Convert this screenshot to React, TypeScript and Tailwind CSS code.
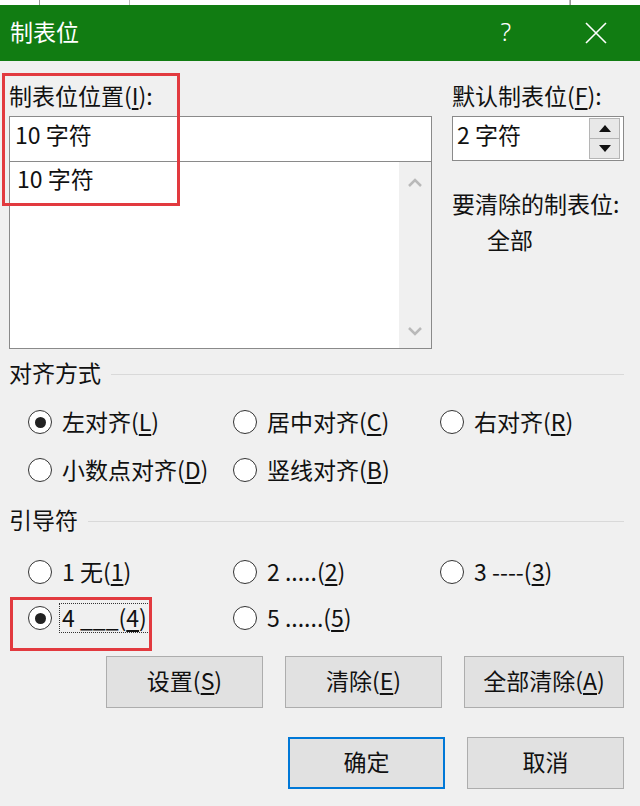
import React from "react";

function Radio({ checked = false }: { checked?: boolean }) {
  return (
    <span className="flex h-[24px] w-[24px] shrink-0 items-center justify-center rounded-full border border-[#333] bg-white">
      {checked && <span className="h-[11px] w-[11px] rounded-full bg-[#222]" />}
    </span>
  );
}

function Option({
  checked,
  focus,
  children,
}: {
  checked?: boolean;
  focus?: boolean;
  children: React.ReactNode;
}) {
  return (
    <label className="flex items-center gap-[10px]">
      <Radio checked={checked} />
      <span
        className={
          focus
            ? "-ml-[3px] border border-dotted border-[#333] px-[2px] pb-[2px] leading-[26px]"
            : "pb-[3px] leading-[28px]"
        }
      >
        {children}
      </span>
    </label>
  );
}

function Key({ children }: { children: React.ReactNode }) {
  return <u className="underline-offset-[3px]">{children}</u>;
}

function GroupTitle({ children }: { children: React.ReactNode }) {
  return (
    <div className="flex h-[36px] items-center gap-[10px]">
      <span className="pb-[4px] leading-[32px]">{children}</span>
      <span className="h-px flex-1 bg-[#d9d9d9]" />
    </div>
  );
}

function Btn({
  children,
  primary = false,
  w = "w-[157px]",
}: {
  children: React.ReactNode;
  primary?: boolean;
  w?: string;
}) {
  return (
    <button
      className={`${w} h-[52px] bg-[#e1e1e1] pb-[4px] text-[23px] text-[#111] ${
        primary ? "border-2 border-[#0078d7]" : "border border-[#adadad]"
      }`}
    >
      {children}
    </button>
  );
}

function Chevron({ up }: { up?: boolean }) {
  return (
    <svg width="16" height="10" viewBox="0 0 16 10" fill="none">
      <path
        d={up ? "M2 8 L8 2 L14 8" : "M2 2 L8 8 L14 2"}
        stroke="#b9b9b9"
        strokeWidth="2.5"
      />
    </svg>
  );
}

export default function App() {
  return (
    <div className="h-[806px] w-[640px] overflow-hidden bg-[#f0f0f0] font-['Noto_Sans_CJK_SC','Noto_Sans',sans-serif] text-[23px] text-[#111]">
      {/* strip of the sheet behind the dialog */}
      <div className="flex h-[5px] bg-white">
        <span className="w-[40px] border-r border-[#999]" />
        <span className="w-[90px] border-r border-[#bbb]" />
        <span className="w-[440px] border-r border-[#bbb]" />
        <span className="flex-1 border-l border-[#999]" />
      </div>

      {/* title bar */}
      <div className="flex h-[56px] items-center bg-[#117c12] pl-[10px] text-white">
        <span className="pb-[4px] leading-[52px]">制表位</span>
        <span className="ml-auto pb-[4px] font-['Noto_Sans',sans-serif] text-[25px] font-light leading-[52px]">
          ?
        </span>
        <span className="ml-[74px] mr-[33px] flex items-center">
          <svg width="22" height="22" viewBox="0 0 22 22">
            <path d="M1 1 L21 21 M21 1 L1 21" stroke="white" strokeWidth="1.6" />
          </svg>
        </span>
      </div>

      {/* body */}
      <div className="relative pl-[9px] pr-[16px] pt-[16px]">
        <div className="flex gap-[20px]">
          <div className="w-[423px]">
            <div className="h-[36px] leading-[36px]">
              制表位位置(<Key>I</Key>):
            </div>
            <div className="mt-[3px] h-[46px] border border-[#8a8a8a] bg-white pl-[5px] leading-[34px]">
              10 字符
            </div>
            <div className="flex h-[187px] border-x border-b border-[#8a8a8a] bg-white">
              <div className="flex-1 pl-[7px] leading-[32px]">10 字符</div>
              <div className="flex w-[32px] flex-col items-center justify-between bg-[#f0f0f0] pb-[12px] pt-[16px]">
                <Chevron up />
                <Chevron />
              </div>
            </div>
          </div>

          <div className="flex-1">
            <div className="h-[36px] leading-[36px]">
              默认制表位(<Key>F</Key>):
            </div>
            <div className="mt-[3px] flex h-[45px] border border-[#8a8a8a] bg-white">
              <div className="flex-1 pl-[4px] leading-[34px]">2 字符</div>
              <div className="my-px mr-[3px] flex w-[31px] flex-col">
                <div className="flex flex-1 items-center justify-center border border-[#b5b5b5] bg-[#e8e8e8]">
                  <svg width="12" height="7" viewBox="0 0 12 7">
                    <path d="M6 0 L12 7 L0 7 Z" fill="#111" />
                  </svg>
                </div>
                <div className="flex flex-1 items-center justify-center border border-t-0 border-[#b5b5b5] bg-[#e8e8e8]">
                  <svg width="12" height="7" viewBox="0 0 12 7">
                    <path d="M0 0 L12 0 L6 7 Z" fill="#111" />
                  </svg>
                </div>
              </div>
            </div>
            <div className="mt-[24px] h-[36px] leading-[36px]">要清除的制表位:</div>
            <div className="h-[36px] pl-[35px] leading-[36px]">全部</div>
          </div>
        </div>

        <div className="mt-[7px]">
          <GroupTitle>对齐方式</GroupTitle>
        </div>
        <div className="mt-[6px] grid grid-cols-[205px_207px_1fr] pl-[19px]">
          <div className="flex h-[48px] items-center">
            <Option checked>
              左对齐(<Key>L</Key>)
            </Option>
          </div>
          <div className="flex h-[48px] items-center">
            <Option>
              居中对齐(<Key>C</Key>)
            </Option>
          </div>
          <div className="flex h-[48px] items-center">
            <Option>
              右对齐(<Key>R</Key>)
            </Option>
          </div>
          <div className="flex h-[48px] items-center">
            <Option>
              小数点对齐(<Key>D</Key>)
            </Option>
          </div>
          <div className="flex h-[48px] items-center">
            <Option>
              竖线对齐(<Key>B</Key>)
            </Option>
          </div>
        </div>

        <div className="mt-[9px]">
          <GroupTitle>引导符</GroupTitle>
        </div>
        <div className="mt-[10px] grid grid-cols-[205px_207px_1fr] pl-[19px]">
          <div className="flex h-[46px] items-center">
            <Option>
              1 无(<Key>1</Key>)
            </Option>
          </div>
          <div className="flex h-[46px] items-center">
            <Option>
              2 .....(<Key>2</Key>)
            </Option>
          </div>
          <div className="flex h-[46px] items-center">
            <Option>
              3 ----(<Key>3</Key>)
            </Option>
          </div>
          <div className="flex h-[46px] items-center">
            <Option checked focus>
              4 ___(<Key>4</Key>)
            </Option>
          </div>
          <div className="flex h-[46px] items-center">
            <Option>
              5 ......(<Key>5</Key>)
            </Option>
          </div>
        </div>

        <div className="mt-[15px] flex justify-end gap-[22px]">
          <Btn>
            设置(<Key>S</Key>)
          </Btn>
          <Btn>
            清除(<Key>E</Key>)
          </Btn>
          <Btn w="w-[160px]">
            全部清除(<Key>A</Key>)
          </Btn>
        </div>
        <div className="mt-[29px] flex justify-end gap-[22px]">
          <Btn primary>确定</Btn>
          <Btn>取消</Btn>
        </div>
      </div>

      {/* red annotation boxes */}
      <div className="pointer-events-none absolute left-[2px] top-[73px] h-[133px] w-[178px] border-[3px] border-[#e23a3f]" />
      <div className="pointer-events-none absolute left-[10px] top-[597px] h-[54px] w-[142px] border-[3px] border-[#e23a3f]" />
    </div>
  );
}
